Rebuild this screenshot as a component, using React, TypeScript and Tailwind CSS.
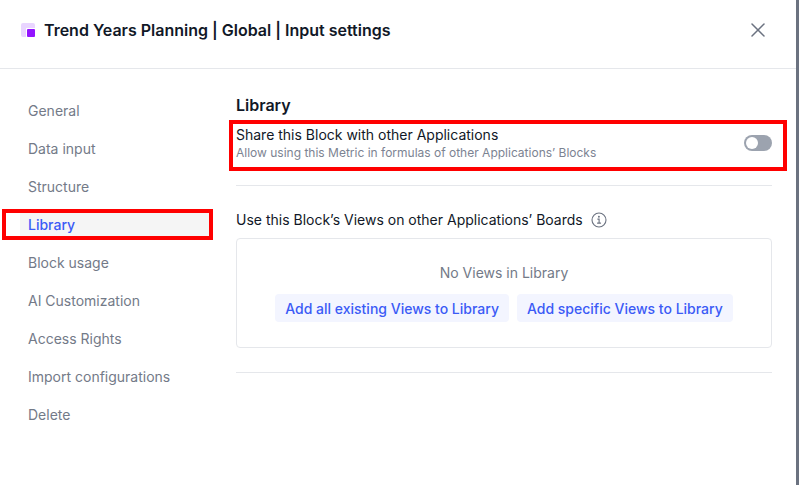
import { X } from 'lucide-react';

const NAV_ITEMS = [
  'General',
  'Data input',
  'Structure',
  'Library',
  'Block usage',
  'AI Customization',
  'Access Rights',
  'Import configurations',
  'Delete',
];

export default function App() {
  return (
    <div className="flex h-[485px] w-[799px] flex-col overflow-hidden border-r-[3px] border-[#6b7280] bg-white font-['Inter',sans-serif]">
      <header className="flex h-[69px] shrink-0 items-center justify-between border-b border-[#e5e7eb] pb-[8px] pl-[21px] pr-[26px]">
        <div className="flex items-center gap-[9px]">
          <div className="relative h-[14px] w-[14px] rounded-[2px] bg-[#e9d5ff]">
            <div className="absolute bottom-0 right-0 h-[9px] w-[9px] rounded-tl-[1px] bg-white pl-[1px] pt-[1px]">
              <div className="h-[8px] w-[8px] rounded-[1px] bg-[#9314ff]" />
            </div>
          </div>
          <h1 className="text-[16px] font-semibold leading-[24px] text-[#111827]">
            Trend Years Planning | Global | Input settings
          </h1>
        </div>
        <X size={24} strokeWidth={1.5} className="text-[#6b7280]" />
      </header>

      <div className="flex min-h-0 flex-1">
        <nav className="flex w-[236px] shrink-0 flex-col gap-[8px] pl-[20px] pr-[26px] pt-[27px]">
          {NAV_ITEMS.map((item) => (
            <div
              key={item}
              className={
                item === 'Library'
                  ? 'relative h-[30px] rounded-[4px] bg-[#f5f5f5] px-[8px] text-[14px] font-medium leading-[30px] text-[#3b5bf6]'
                  : 'h-[30px] px-[8px] text-[14px] font-normal leading-[30px] text-[#737a88]'
              }
            >
              {item}
              {item === 'Library' && (
                <div className="absolute -left-[18px] -right-[3px] -top-[1px] bottom-0 border-4 border-[#ff0000]" />
              )}
            </div>
          ))}
        </nav>

        <main className="w-[536px] pt-[24px]">
          <h2 className="text-[16px] font-semibold leading-[24px] text-[#111827]">Library</h2>

          <div className="relative mt-[8px] flex items-center justify-between">
            <div>
              <div className="text-[14px] leading-[20px] text-[#111827]">Share this Block with other Applications</div>
              <div className="text-[12px] leading-[16px] text-[#7c8392]">
                Allow using this Metric in formulas of other Applications’ Blocks
              </div>
            </div>
            <div className="flex h-[16px] w-[28px] items-center rounded-full bg-[#9ca3af] pl-[2px]">
              <div className="h-[12px] w-[12px] rounded-full bg-white" />
            </div>
            <div className="absolute -bottom-[10px] -left-[7px] -right-[15px] -top-[5px] border-4 border-[#ff0000]" />
          </div>

          <div className="mt-[24px] border-t border-[#e5e7eb] pt-[24px]">
            <div className="flex items-center gap-[8px]">
              <span className="text-[14px] leading-[20px] text-[#111827]">
                Use this Block’s Views on other Applications’ Boards
              </span>
              <svg width="16" height="16" viewBox="0 0 16 16" fill="none" stroke="#6b7280" strokeWidth="1.1" strokeLinecap="round">
                <circle cx="8" cy="8" r="7" />
                <path d="M6.8 7.1h1.3v4M6.5 11.1h3.1" />
                <circle cx="7.9" cy="4.7" r="0.4" fill="#6b7280" />
              </svg>
            </div>

            <div className="mt-[8px] flex h-[110px] flex-col items-center rounded-[4px] border border-[#e5e7eb] pt-[24px]">
              <div className="text-[14px] leading-[20px] text-[#737a88]">No Views in Library</div>
              <div className="mt-[11px] flex gap-[8px]">
                <button className="h-[28px] rounded-[4px] bg-[#f3f5ff] px-[10px] text-[14px] font-medium text-[#3b5bf6]">
                  Add all existing Views to Library
                </button>
                <button className="h-[28px] rounded-[4px] bg-[#f3f5ff] px-[10px] text-[14px] font-medium text-[#3b5bf6]">
                  Add specific Views to Library
                </button>
              </div>
            </div>
          </div>

          <div className="mt-[24px] border-t border-[#e5e7eb]" />
        </main>
      </div>
    </div>
  );
}
